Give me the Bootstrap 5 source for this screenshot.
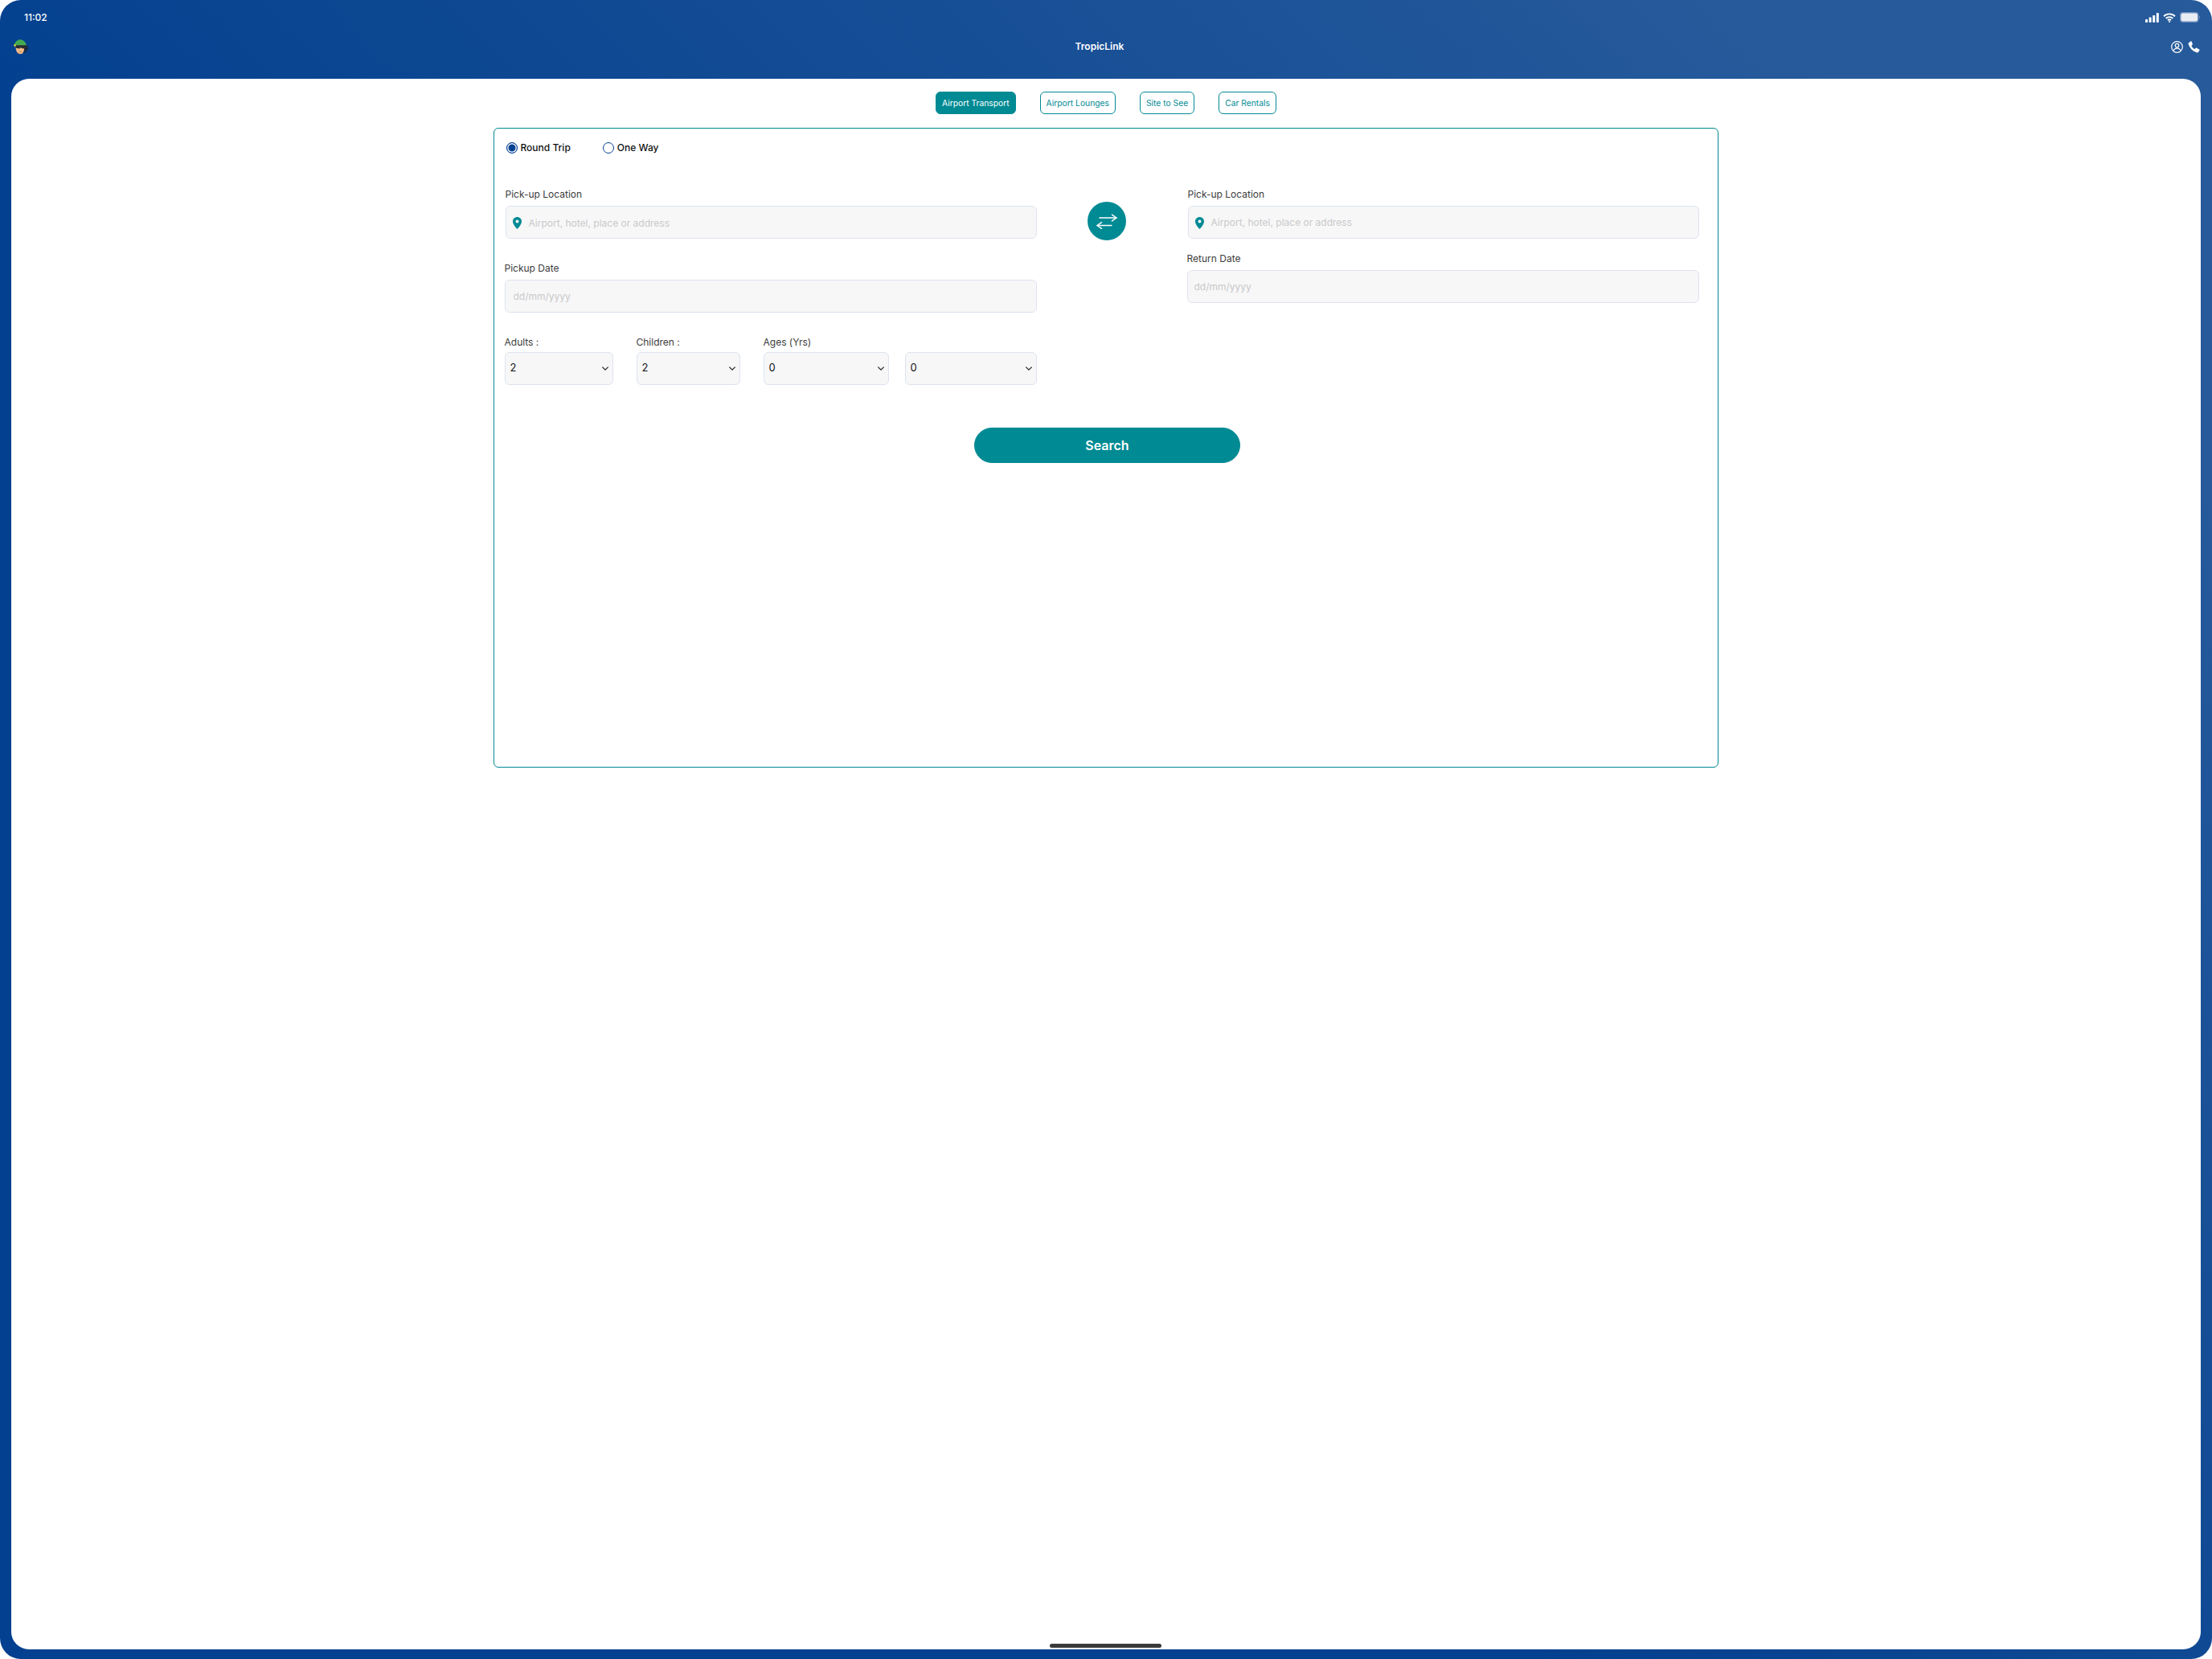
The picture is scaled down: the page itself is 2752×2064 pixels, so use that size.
<!DOCTYPE html>
<html lang="en">
<head>
    <meta charset="UTF-8">
    <meta name="viewport" content="width=device-width, initial-scale=1.0">
    <title>TropicLink</title>
    <link href="https://cdn.jsdelivr.net/npm/bootstrap@5.3.0/dist/css/bootstrap.min.css" rel="stylesheet">
    <style>
        html, body { height: 100%; background: #fff; }
        body { font-family: "Inter", "Liberation Sans", sans-serif; margin: 0; }
        .device {
            height: 2064px;
            border-radius: 26px;
            background: linear-gradient(45deg, #03408f 40%, #265a9b 88%);
            overflow: hidden;
        }
        .status-row { height: 42px; padding: 1px 15px 0 30px; color: #fff; font-size: 12px; font-weight: 500; }
        .nav-row { height: 32px; padding: 0 15px 0 16px; }
        .brand { color: #fff; font-size: 12px; font-weight: 600; }
        .spacer { height: 24px; }
        .panel {
            position: relative;
            height: 1954px;
            margin: 0 14px;
            background: #fff;
            border-radius: 22px;
            padding-top: 16px;
        }
        .home-bar { position: absolute; left: 1292px; bottom: 2px; width: 139px; height: 5px; border-radius: 3px; background: #3a3a3a; }

        .tab-btn {
            --bs-btn-padding-x: 7px;
            --bs-btn-padding-y: 0;
            --bs-btn-font-size: 10.3px;
            --bs-btn-border-radius: 6px;
            --bs-btn-color: #008a94;
            --bs-btn-border-color: #008a94;
            --bs-btn-hover-bg: #008a94;
            --bs-btn-hover-border-color: #008a94;
            --bs-btn-active-bg: #008a94;
            --bs-btn-active-border-color: #008a94;
            height: 28px;
            line-height: 26px;
        }
        .tab-btn.active { background: #008a94; color: #fff; }

        .trip-card {
            width: 1524px;
            height: 796px;
            margin-top: 17px;
            border: 1.5px solid #008a94;
            border-radius: 6px;
            padding: 16.5px 23.5px 0 14.5px;
        }
        .trip-type { height: 14px; margin-bottom: 43px; color: #111; font-size: 12px; font-weight: 500; }
        .trip-type .form-check { display: flex; align-items: center; gap: 4px; min-height: 0; margin: 0; padding: 0; }
        .trip-type .form-check-input {
            float: none;
            width: 14px;
            height: 14px;
            margin: 0;
            border: 1.5px solid #03408f;
        }
        .trip-type .form-check-input:checked {
            background-image: none;
            background-color: #03408f;
            box-shadow: inset 0 0 0 1.5px #fff;
        }
        .trip-type .round { margin-right: 40px; }

        .col-left { width: 662px; margin-left: -2px; }
        .col-right { width: 637px; margin-left: auto; }
        .swap-btn {
            width: 48px;
            height: 48px;
            margin: 17px 0 0 63px;
            background: #008a94;
            border: 0;
        }
        .field-label { display: block; height: 16px; margin: 0; color: #3c3c3c; font-size: 12px; line-height: 16px; }
        .ms-1px { margin-left: 1px; }
        .field-box {
            height: 41px;
            background-color: #f7f7f8;
            border: 1px solid #dde3ee;
            border-radius: 6px;
            font-size: 12px;
        }
        .field-box::placeholder, .field-box input::placeholder { color: #c9c9c9; opacity: 1; }
        .loc-box { padding: 3px 0 0 8px; gap: 9px; }
        .col-right .loc-box { padding-top: 2px; }
        .loc-box input { flex: 1; min-width: 0; border: 0; outline: 0; padding: 0; background: transparent; font-size: 12px; }
        .date-box { padding: 0 10px; }
        .col-right .date-box { padding: 0 8px; }
        .field-box:focus { background-color: #f7f7f8; border-color: #dde3ee; box-shadow: none; }

        .guests { margin-top: 29px; }
        .guests .field-label { margin-bottom: 4px; }
        .w-adults { width: 135px; margin-right: 29px; }
        .w-children { width: 129px; margin-right: 29px; }
        .w-age1 { width: 156px; }
        .w-age2 { width: 164px; }
        .field-select {
            padding: 0 6px;
            color: #111;
            font-size: 13px;
            background-image: url("data:image/svg+xml,%3csvg xmlns='http://www.w3.org/2000/svg' viewBox='0 0 12 8'%3e%3cpath fill='none' stroke='%23222' stroke-width='1.5' stroke-linecap='round' stroke-linejoin='round' d='M2 2l4 4 4-4'/%3e%3c/svg%3e");
            background-position: right 4px center;
            background-size: 10px 7px;
        }
        .search-row { margin-top: 53px; padding-left: 12px; }
        .search-btn {
            --bs-btn-color: #fff;
            --bs-btn-bg: #008a94;
            --bs-btn-border-color: #008a94;
            --bs-btn-hover-color: #fff;
            --bs-btn-hover-bg: #008a94;
            --bs-btn-hover-border-color: #008a94;
            width: 331px;
            height: 44px;
            font-size: 16px;
            font-weight: 600;
        }
    </style>
</head>
<body>
    <div class="device">
        <div class="status-row d-flex align-items-center justify-content-between">
            <span>11:02</span>
            <span class="d-flex align-items-center" style="gap:5px">
                <svg width="17" height="12" viewBox="0 0 17 12" fill="#fff"><rect x="0" y="8" width="3" height="4" rx=".8"/><rect x="4.6" y="5.5" width="3" height="6.5" rx=".8"/><rect x="9.2" y="3" width="3" height="9" rx=".8"/><rect x="13.8" y="0" width="3" height="12" rx=".8"/></svg>
                <svg width="16" height="12" viewBox="0 0 16 12" fill="none" stroke="#fff" stroke-width="1.9"><path d="M1 4.2a10 10 0 0 1 14 0"/><path d="M3.6 6.9a6.3 6.3 0 0 1 8.8 0"/><path d="M6 9.3a2.9 2.9 0 0 1 4 0"/><circle cx="8" cy="11" r=".7" fill="#fff" stroke-width=".8"/></svg>
                <svg width="25" height="13" viewBox="0 0 25 13"><rect x=".7" y=".7" width="22" height="11.6" rx="3" fill="#e9edf4" stroke="#6f8fbb" stroke-width="1.4"/><path d="M24 4.5c.7.3 1 1 1 2s-.3 1.7-1 2z" fill="#6f8fbb"/></svg>
            </span>
        </div>
        <div class="nav-row d-flex align-items-center justify-content-between">
            <svg width="19" height="19" viewBox="0 0 19 19">
                <path d="M14 8h4.500l.3 4-2.500 4-3.300.5z" fill="#1b2a40"/>
                <path d="M1.500 8C2.500 2.500 6 .3 9.500.3c3.500.2 6.500 3 7.500 7.700z" fill="#45ab52"/>
                <path d="M3.500 9h10.500v4.500l-1.700 3.500c-1 1.300-3.500 1.500-5.200.7C4.800 16.500 3.500 13 3.500 9z" fill="#f2b987"/>
                <path d="M2 7.200h16l-.2 3-5 1.300-3.300-1.300-1.300 1.300-4-.8z" fill="#2a2d33"/>
                <circle cx="2.500" cy="7.500" r="1.300" fill="#e8e03a"/>
                <path d="M7.500 15.300c1 .5 2.200.5 3.300-.1" stroke="#a5663c" stroke-width=".7" fill="none"/>
            </svg>
            <span class="brand">TropicLink</span>
            <span class="d-flex align-items-center" style="gap:6px">
                <svg width="15" height="15" viewBox="0 0 15 15" fill="none" stroke="#fff" stroke-width="1.2"><circle cx="7.5" cy="7.5" r="6.8"/><circle cx="7.5" cy="5.6" r="2.3"/><path d="M3 12.300c.6-2.200 2.300-3.200 4.500-3.200s3.900 1 4.500 3.200"/></svg>
                <svg width="15" height="15" viewBox="0 0 15 15" fill="#fff"><path d="M3.300.5 1 2.200C.5 2.700.4 3.500.7 4.300c1.800 4.800 5.200 8.300 10 10 .8.300 1.600.2 2.100-.4l1.600-2.200c.3-.4.200-1-.2-1.300L11 8.700c-.4-.3-.9-.2-1.200.1l-1.200 1.300C6.700 9.200 5.200 7.700 4.400 5.900l1.300-1.300c.3-.3.400-.8.100-1.200L4.600.7C4.300.3 3.700.2 3.300.5z"/></svg>
            </span>
        </div>
        <div class="spacer"></div>

        <div class="panel d-flex flex-column align-items-center">
            <div class="d-flex justify-content-center" style="gap:30px">
                <button class="btn tab-btn active">Airport Transport</button>
                <button class="btn tab-btn">Airport Lounges</button>
                <button class="btn tab-btn">Site to See</button>
                <button class="btn tab-btn">Car Rentals</button>
            </div>

            <div class="card trip-card">
                <div class="trip-type d-flex align-items-center">
                    <div class="form-check round">
                        <input class="form-check-input" type="radio" name="trip" id="roundTrip" checked>
                        <label for="roundTrip">Round Trip</label>
                    </div>
                    <div class="form-check">
                        <input class="form-check-input" type="radio" name="trip" id="oneWay">
                        <label for="oneWay">One Way</label>
                    </div>
                </div>

                <div class="d-flex">
                    <div class="col-left">
                        <div class="ms-1px">
                            <label class="field-label" style="margin-bottom:6px">Pick-up Location</label>
                            <div class="form-control field-box loc-box d-flex align-items-center">
                                <svg width="11" height="15" viewBox="0 0 11 15"><path fill-rule="evenodd" d="M5.500 0C2.500 0 0 2.400 0 5.400 0 9 3.800 13 5.500 15 7.200 13 11 9 11 5.400 11 2.400 8.500 0 5.500 0zm0 3.500a2 2 0 1 1 0 4 2 2 0 0 1 0-4z" fill="#008a94"/></svg>
                                <input type="text" placeholder="Airport, hotel, place or address">
                            </div>
                        </div>
                        <div style="margin-top:29px">
                            <label class="field-label" style="margin-bottom:6px">Pickup Date</label>
                            <input type="text" class="form-control field-box date-box" placeholder="dd/mm/yyyy">
                        </div>
                        <div class="guests d-flex">
                            <div class="w-adults">
                                <label class="field-label">Adults :</label>
                                <select class="form-select field-box field-select"><option>2</option></select>
                            </div>
                            <div class="w-children">
                                <label class="field-label">Children :</label>
                                <select class="form-select field-box field-select"><option>2</option></select>
                            </div>
                            <div>
                                <label class="field-label">Ages (Yrs)</label>
                                <div class="d-flex" style="gap:20px">
                                    <select class="form-select field-box field-select w-age1"><option>0</option></select>
                                    <select class="form-select field-box field-select w-age2"><option>0</option></select>
                                </div>
                            </div>
                        </div>
                    </div>

                    <button class="btn swap-btn rounded-circle d-flex align-items-center justify-content-center p-0" aria-label="Swap">
                        <svg width="26" height="20" viewBox="0 0 26 20" fill="none" stroke="#fff" stroke-width="1.5" stroke-linecap="round" stroke-linejoin="round"><path d="M4 6h21"/><path d="M19.500 2.200l5.500 3.800-5.500 3.800"/><path d="M19 15.500H1"/><path d="M6.500 11.700L1 15.500l5.500 3.800"/></svg>
                    </button>

                    <div class="col-right">
                        <div class="ms-1px">
                            <label class="field-label" style="margin-bottom:6px">Pick-up Location</label>
                            <div class="form-control field-box loc-box d-flex align-items-center">
                                <svg width="11" height="15" viewBox="0 0 11 15"><path fill-rule="evenodd" d="M5.500 0C2.500 0 0 2.400 0 5.400 0 9 3.800 13 5.500 15 7.200 13 11 9 11 5.400 11 2.400 8.500 0 5.500 0zm0 3.500a2 2 0 1 1 0 4 2 2 0 0 1 0-4z" fill="#008a94"/></svg>
                                <input type="text" placeholder="Airport, hotel, place or address">
                            </div>
                        </div>
                        <div style="margin-top:17px">
                            <label class="field-label" style="margin-bottom:6px">Return Date</label>
                            <input type="text" class="form-control field-box date-box" placeholder="dd/mm/yyyy">
                        </div>
                    </div>
                </div>

                <div class="search-row d-flex justify-content-center">
                    <button class="btn search-btn rounded-pill">Search</button>
                </div>
            </div>

            <div class="home-bar"></div>
        </div>
    </div>

    <script src="https://cdn.jsdelivr.net/npm/bootstrap@5.3.0/dist/js/bootstrap.bundle.min.js"></script>
</body>
</html>
